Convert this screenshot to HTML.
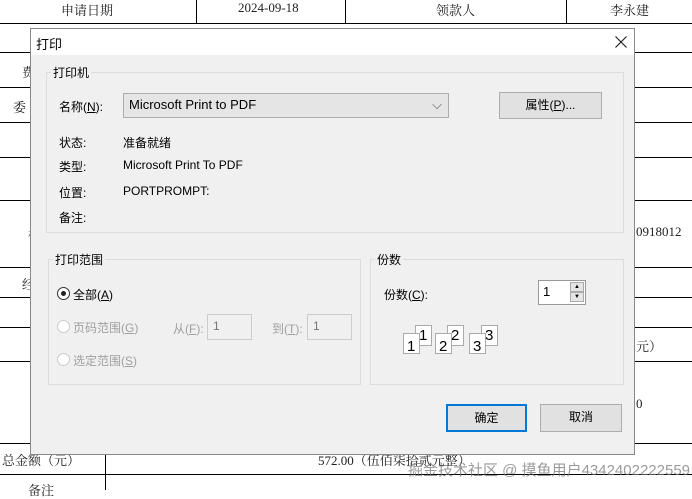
<!DOCTYPE html>
<html><head><meta charset="utf-8"><style>
*{margin:0;padding:0;box-sizing:border-box}
body{width:692px;height:490px;overflow:hidden;background:#fff;position:relative;font-family:"Liberation Sans","Noto Sans CJK SC",sans-serif;font-size:12px;color:#000}
.h{position:absolute;left:0;width:692px;height:1px;background:#000}
.v{position:absolute;width:1px;background:#000}
.t{position:absolute;font-family:"Liberation Serif","Noto Serif CJK SC",serif;font-size:13px;color:#222}
.a{position:absolute;white-space:nowrap}
.dlg{position:absolute;left:30px;top:28px;width:605px;height:427px;background:#f0f0f0;border:1px solid #888}
.tb{position:absolute;left:0;top:0;width:603px;height:26px;background:#fff}
.grp{position:absolute;border:1px solid #dcdcdc}
.gl{position:absolute;background:#f0f0f0;padding:0 2px;top:-9px;left:4px}
.btn{position:absolute;background:#e1e1e1;border:1px solid #adadad;text-align:center;line-height:25px}
.inp{position:absolute;border:1px solid #ccc;background:#f0f0f0;color:#777;padding-left:5px;line-height:22px}
.dis{color:#a0a0a0}
.rad{position:absolute;width:13px;height:13px;border-radius:50%;border:1px solid #333;background:#fff}
.page{position:absolute;width:17px;height:21px;background:#fff;border:1px solid #aaa;font-size:15px;line-height:26px;padding-left:3px}
</style></head><body>
<div class="h" style="top:23px"></div><div class="h" style="top:52px"></div><div class="h" style="top:87px"></div><div class="h" style="top:122px"></div><div class="h" style="top:157px"></div><div class="h" style="top:200px"></div><div class="h" style="top:267px"></div><div class="h" style="top:297px"></div><div class="h" style="top:327px"></div><div class="h" style="top:361px"></div><div class="h" style="top:443px"></div><div class="h" style="top:474px"></div>
<div class="v" style="left:196px;top:0;height:23px"></div><div class="v" style="left:345px;top:0;height:23px"></div><div class="v" style="left:566px;top:0;height:23px"></div><div class="v" style="left:105px;top:443px;height:47px"></div>
<div class="t" style="left:61px;top:0">申请日期</div><div class="t" style="left:238px;top:0">2024-09-18</div><div class="t" style="left:436px;top:0">领款人</div><div class="t" style="left:610px;top:0">李永建</div>
<div class="t" style="left:22px;top:62px">费</div><div class="t" style="left:13px;top:97px">委</div><div class="t" style="left:28px;top:224px">相</div><div class="t" style="left:22px;top:274px">经</div>
<div class="t" style="left:636px;top:224px">0918012</div><div class="t" style="left:636px;top:336px">元）</div><div class="t" style="left:636px;top:396px">0</div>
<div class="t" style="left:2px;top:450px">总金额（元）</div><div class="t" style="left:318px;top:450px">572.00（伍佰柒拾贰元整）</div><div class="t" style="left:28px;top:480px">备注</div>
<div class="a" style="left:408px;top:459px;font-size:15px;color:rgba(120,120,120,.75)">掘金技术社区 @ 摸鱼用户4342402222559</div>
<div class="dlg">
<div class="tb"></div>
<div class="a" style="left:5px;top:5px;font-size:13px">打印</div>
<svg style="position:absolute;left:584px;top:7px" width="12" height="12"><path d="M0.5 0.5L11.5 11.5M11.5 0.5L0.5 11.5" stroke="#222" stroke-width="1.2"/></svg>
<div class="grp" style="left:15px;top:43px;width:578px;height:161px"><div class="gl">打印机</div></div>
<div class="a" style="left:28px;top:69px">名称(<u>N</u>):</div>
<div class="inp" style="left:92px;top:64px;width:326px;height:25px;background:#e5e5e5;color:#000;font-size:13px;border-color:#adadad">Microsoft Print to PDF<span style="position:absolute;right:6px;top:0;color:#555">⌵</span></div>
<div class="btn" style="left:468px;top:63px;width:103px;height:27px">属性(<u>P</u>)...</div>
<div class="a" style="left:28px;top:105px">状态:</div><div class="a" style="left:92px;top:105px">准备就绪</div>
<div class="a" style="left:28px;top:129px">类型:</div><div class="a" style="left:92px;top:129px">Microsoft Print To PDF</div>
<div class="a" style="left:28px;top:155px">位置:</div><div class="a" style="left:92px;top:155px">PORTPROMPT:</div>
<div class="a" style="left:28px;top:180px">备注:</div>
<div class="grp" style="left:17px;top:230px;width:313px;height:126px"><div class="gl">打印范围</div></div>
<div class="rad" style="left:26px;top:258px"><div style="position:absolute;left:3px;top:3px;width:5px;height:5px;border-radius:50%;background:#222"></div></div>
<div class="a" style="left:42px;top:257px">全部(<u>A</u>)</div>
<div class="rad" style="left:26px;top:291px;border-color:#ccc"></div><div class="a dis" style="left:42px;top:290px">页码范围(<u>G</u>)</div>
<div class="a dis" style="left:142px;top:291px">从(<u>F</u>):</div><div class="inp" style="left:176px;top:285px;width:45px;height:26px">1</div>
<div class="a dis" style="left:241px;top:291px">到(<u>T</u>):</div><div class="inp" style="left:276px;top:285px;width:45px;height:26px">1</div>
<div class="rad" style="left:26px;top:324px;border-color:#ccc"></div><div class="a dis" style="left:42px;top:323px">选定范围(<u>S</u>)</div>
<div class="grp" style="left:339px;top:230px;width:254px;height:126px"><div class="gl">份数</div></div>
<div class="a" style="left:353px;top:257px">份数(<u>C</u>):</div>
<div style="position:absolute;left:507px;top:251px;width:48px;height:25px;border:1px solid #999;background:#fff;padding-left:4px;line-height:22px;font-size:13px">1
<div style="position:absolute;right:1px;top:1px;width:14px;height:10px;background:#e5e5e5;border:1px solid #aaa;font-size:6px;line-height:9px;text-align:center">▲</div>
<div style="position:absolute;right:1px;top:11px;width:14px;height:10px;background:#e5e5e5;border:1px solid #aaa;font-size:6px;line-height:9px;text-align:center">▼</div></div>
<div class="page" style="left:384px;top:296px;line-height:20px">1</div><div class="page" style="left:372px;top:304px">1</div>
<div class="page" style="left:416px;top:296px;line-height:20px">2</div><div class="page" style="left:404px;top:304px">2</div>
<div class="page" style="left:450px;top:296px;line-height:20px">3</div><div class="page" style="left:438px;top:304px">3</div>
<div class="btn" style="left:415px;top:375px;width:81px;height:28px;border:2px solid #0078d7;line-height:24px">确定</div>
<div class="btn" style="left:509px;top:375px;width:82px;height:28px">取消</div>
</div>
</body></html>
